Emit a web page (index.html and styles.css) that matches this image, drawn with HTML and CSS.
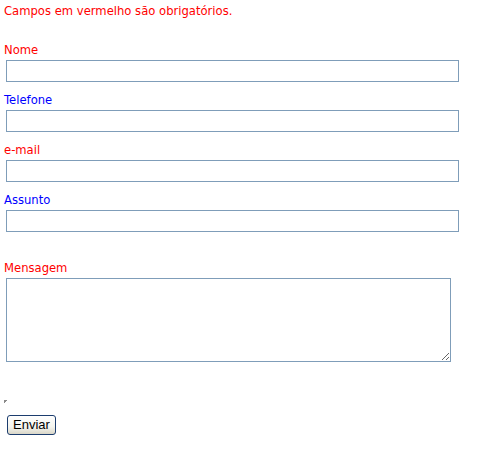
FILE: index.html
```html
<!DOCTYPE html>
<html>
<head>
<meta charset="utf-8">
<link rel="stylesheet" href="styles.css">
</head>
<body>
<form class="form">
  <p class="note req">Campos em vermelho são obrigatórios.</p>
  <div class="field f-first">
    <label class="label req">Nome</label>
    <input class="text" type="text">
  </div>
  <div class="field">
    <label class="label opt">Telefone</label>
    <input class="text" type="text">
  </div>
  <div class="field">
    <label class="label req">e-mail</label>
    <input class="text" type="text">
  </div>
  <div class="field">
    <label class="label opt">Assunto</label>
    <input class="text" type="text">
  </div>
  <div class="field f-msg">
    <label class="label req">Mensagem</label>
    <textarea class="area"></textarea>
  </div>
  <span class="broken"></span>
  <button class="btn" type="button">Enviar</button>
</form>
</body>
</html>
```
FILE: styles.css
```css
html, body {
  margin: 0;
  padding: 0;
  background: #fff;
}
body {
  font-family: "DejaVu Sans", Verdana, sans-serif;
  font-size: 11.6px;
  line-height: 14px;
}
.form {
  display: flex;
  flex-direction: column;
  align-items: flex-start;
  padding: 4px 0 0 4px;
}
.note {
  margin: 0;
}
.req { color: #ff0000; }
.opt { color: #0000ff; }
.field {
  display: flex;
  flex-direction: column;
  align-items: flex-start;
  margin-top: 11px;
}
.f-first { margin-top: 25px; }
.f-msg { margin-top: 29px; }
.label {
  display: block;
  height: 14px;
}
.text {
  box-sizing: border-box;
  margin: 3px 0 0 2px;
  width: 453px;
  height: 22px;
  border: 1px solid #7f9db9;
  padding: 0 2px;
  font: 11px "DejaVu Sans", sans-serif;
  outline: none;
  background: #fff;
}
.area {
  box-sizing: border-box;
  margin: 3px 0 0 2px;
  width: 445px;
  height: 84px;
  border: 1px solid #7f9db9;
  padding: 2px;
  font: 11px "DejaVu Sans", sans-serif;
  resize: both;
  outline: none;
}
.broken {
  display: block;
  margin-top: 38px;
  width: 4px;
  height: 4px;
  background: linear-gradient(135deg, #8a8a8a 0 50%, transparent 50%);
}
.btn {
  margin: 11px 0 0 3px;
  box-sizing: border-box;
  width: 49px;
  height: 20px;
  padding: 0;
  border: 1px solid #1c3d6e;
  border-radius: 3px;
  background: linear-gradient(#ffffff 0%, #f4f4ee 60%, #d9d6c8 100%);
  font: 13px "Liberation Sans", Arial, sans-serif;
  color: #000;
  line-height: 18px;
}
```
